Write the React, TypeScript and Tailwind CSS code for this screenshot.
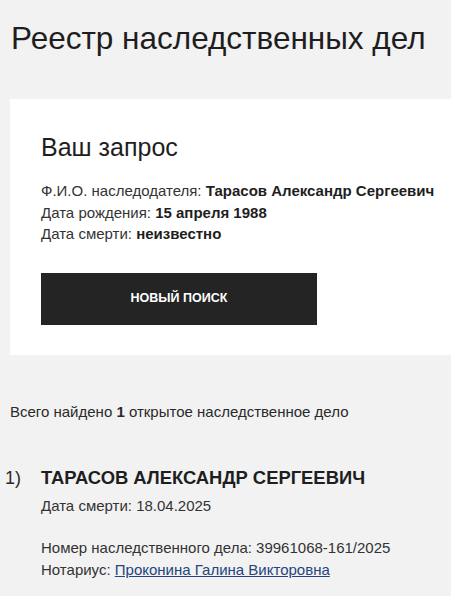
export default function App() {
  return (
    <div className="min-h-screen bg-[#f2f2f2] text-[#222] font-['Liberation_Sans',Arial,sans-serif]">
      <h1 className="pl-[11px] pt-[18px] text-[31.5px] leading-[40px] text-[#1e1e1e]">Реестр наследственных дел</h1>

      <div className="ml-[10px] mt-[41px] h-[256px] bg-white pl-[31px] pt-[33px]">
        <h2 className="text-[25px] leading-[30px] text-[#1e1e1e]">Ваш запрос</h2>
        <div className="mt-[18px] text-[15px] leading-[21.5px] text-[#333]">
          <div>
            Ф.И.О. наследодателя: <b className="text-[#1e1e1e]">Тарасов Александр Сергеевич</b>
          </div>
          <div>
            Дата рождения: <b className="text-[#1e1e1e]">15 апреля 1988</b>
          </div>
          <div>
            Дата смерти: <b className="text-[#1e1e1e]">неизвестно</b>
          </div>
        </div>
        <button className="mt-[28px] flex h-[52px] w-[276px] items-center justify-center bg-[#242424] text-[12.5px] font-bold text-white">
          НОВЫЙ ПОИСК
        </button>
      </div>

      <p className="mt-[47px] pl-[10px] text-[15px] leading-[20px] text-[#2a2a2a]">
        Всего найдено <b>1</b> открытое наследственное дело
      </p>

      <div className="mt-[44px] flex">
        <div className="w-[41px] pl-[5px] text-[18px] leading-[24px] text-[#2a2a2a]">1)</div>
        <div className="flex-1">
          <div className="text-[18.4px] font-bold leading-[24px] text-[#1e1e1e]">ТАРАСОВ АЛЕКСАНДР СЕРГЕЕВИЧ</div>
          <div className="mt-[6px] text-[15px] leading-[20px] text-[#333]">Дата смерти: 18.04.2025</div>
          <div className="mt-[21px] text-[15px] leading-[22px] text-[#333]">
            <div>Номер наследственного дела: 39961068-161/2025</div>
            <div>
              Нотариус:{' '}
              <a href="#" className="text-[#24457d] underline">
                Проконина Галина Викторовна
              </a>
            </div>
          </div>
        </div>
      </div>
    </div>
  );
}
